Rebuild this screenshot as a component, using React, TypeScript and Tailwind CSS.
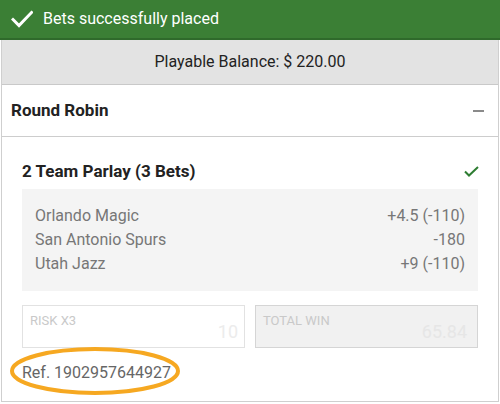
import React from 'react'

const picks = [
  { team: 'Orlando Magic', line: '+4.5 (-110)' },
  { team: 'San Antonio Spurs', line: '-180' },
  { team: 'Utah Jazz', line: '+9 (-110)' },
]

export default function App() {
  return (
    <div className="w-[500px] h-[404px] overflow-hidden bg-white font-['Roboto',sans-serif]">
      <div className="flex h-[40px] items-center border-b-2 border-[#2f6a2b] bg-[#3b7f35] pl-[11px] text-white">
        <svg width="22" height="18" viewBox="0 0 22 18" fill="none">
          <path d="M2 9.5 L8 15.5 L20.5 2.5" stroke="white" strokeWidth="3" strokeLinecap="square" />
        </svg>
        <span className="ml-[10px] text-[16px] leading-none">Bets successfully placed</span>
      </div>

      <div className="ml-px w-[498px] border-x border-b border-[#cfcfcf]">
        <div className="flex h-[45px] items-center justify-center border-b border-[#c9c9c9] bg-[#e3e3e3] text-[16px] text-[#222]">
          Playable Balance: $ 220.00
        </div>

        <div className="flex h-[52px] items-center justify-between border-b border-[#cdcdcd] pl-[9px] pr-[14px]">
          <span className="text-[17px] font-bold text-[#222]">Round Robin</span>
          <span className="block h-[2px] w-[11px] bg-[#8a8a8a]" />
        </div>

        <div className="px-[20px] pt-[22px] pb-[16px]">
          <div className="flex h-[24px] items-center justify-between">
            <span className="text-[17px] font-bold leading-6 text-[#222]">2 Team Parlay (3 Bets)</span>
            <svg width="15" height="11" viewBox="0 0 15 11" fill="none" className="mr-[-1px]">
              <path d="M1 5.5 L5 9.5 L14 1" stroke="#2e7d32" strokeWidth="2" />
            </svg>
          </div>

          <div className="mt-[6px] bg-[#f4f4f4] px-[13px] pt-[15px] pb-[15px] text-[16px] leading-6 text-[#777]">
            {picks.map((p) => (
              <div key={p.team} className="flex justify-between">
                <span>{p.team}</span>
                <span>{p.line}</span>
              </div>
            ))}
          </div>

          <div className="mt-[14px] grid grid-cols-2 gap-[10px]">
            <div className="relative h-[43px] border border-[#e2e2e2] bg-white">
              <span className="absolute left-[7px] top-[5px] text-[13px] uppercase text-[#c9c9c9]">Risk X3</span>
              <span className="absolute right-[6px] bottom-[2px] text-[18px] text-[#ececec]">10</span>
            </div>
            <div className="relative h-[43px] border border-[#d5d5d5] bg-[#f1f1f1]">
              <span className="absolute left-[7px] top-[5px] text-[13px] uppercase text-[#c9c9c9]">Total Win</span>
              <span className="absolute right-[10px] bottom-[2px] text-[18px] text-[#e6e6e6]">65.84</span>
            </div>
          </div>

          <div className="relative mt-[13px] h-[24px] text-[16px] leading-6 text-[#666]">
            Ref. 1902957644927
            <svg className="absolute left-[-14px] top-[-16px]" width="174" height="52" viewBox="0 0 174 52" fill="none">
              <ellipse cx="87" cy="26" rx="83" ry="22" stroke="#f6a821" strokeWidth="4" />
            </svg>
          </div>
        </div>
      </div>
    </div>
  )
}
